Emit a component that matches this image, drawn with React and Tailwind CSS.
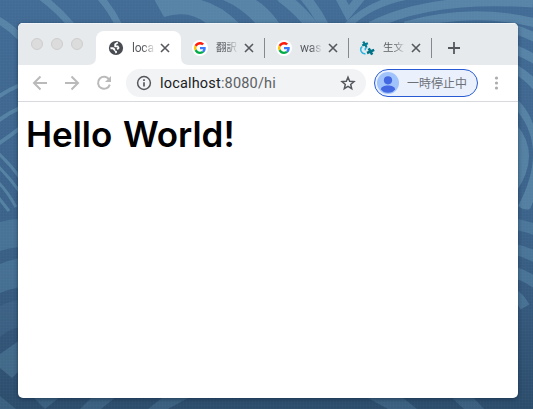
import React from "react";

function Wallpaper() {
  return (
    <svg className="absolute inset-0 h-full w-full" viewBox="0 0 533 409" preserveAspectRatio="none">
      <defs>
        <linearGradient id="sea" x1="0" y1="0" x2="0" y2="1">
          <stop offset="0" stopColor="#426b95" />
          <stop offset="0.55" stopColor="#3b6289" />
          <stop offset="1" stopColor="#2c4c6b" />
        </linearGradient>
        <pattern id="weave" width="3" height="3" patternUnits="userSpaceOnUse">
          <path d="M0 0h3M0 0v3" stroke="#9cc0d8" strokeWidth="0.6" opacity="0.08" />
        </pattern>
      </defs>
      <rect width="533" height="409" fill="url(#sea)" />
      <g fill="none" stroke="#6c9bb8" strokeOpacity="0.52">
        <path d="M40-4Q58 9 72 26" strokeWidth="7" />
        <path d="M99-4Q111 9 119 26" strokeWidth="7" />
        <path d="M-2 20Q9 26 20 37" strokeWidth="7" />
        <path d="M281-4Q300 10 312 26" strokeWidth="12" />
        <path d="M304-4Q316 10 324 26" strokeWidth="10" />
        <path d="M339-4L348 13L362-4" strokeWidth="9" />
        <path d="M347 26Q370 3 408-4" strokeWidth="7" />
        <path d="M371 26Q430-4 533 3" strokeWidth="9" />
        <path d="M405 26Q470 7 536 23" strokeWidth="9" />
        <path d="M514 29Q526 33 536 38" strokeWidth="9" />
        <path d="M514 49Q526 54 536 60" strokeWidth="9" />
        <path d="M514 68Q527 76 536 86" strokeWidth="9" />
        <path d="M-2 97Q8 90 20 85M-2 121Q8 113 20 108M-2 144Q10 136 20 128" strokeWidth="4" />
        <path d="M-2 153Q11 165 20 178M-2 166Q9 177 20 192M-2 182Q7 191 16 207M-2 197L9 211" strokeWidth="3" />
      </g>
      <g fill="none" stroke="#6395b4" strokeOpacity="0.4">
        <path d="M514 224Q526 226 536 230M514 249Q526 252 536 257M514 272Q526 276 536 283" strokeWidth="11" />
        <path d="M514 294Q520 298 525 307" strokeWidth="10" />
      </g>
      <g fill="#6c9bb8" fillOpacity="0.5">
        <path d="M155 1L164 17Q189 9 207 24H240Q221 5 201 0H155Z" />
        <path d="M223 0Q242 8 256 24H280Q268 7 256 0Z" />
        <path d="M516 124Q542 154 516 192Z" />
        <path d="M518 100Q530 112 534 127V200L530 209Q524 211 518 206Q548 150 518 112Z" />
      </g>
      <g fill="#6395b4" fillOpacity="0.34">
        <path d="M0 222Q10 219 20 219V247Q8 248 0 251Z" />
        <path d="M0 264Q10 260 20 258V287Q10 289 0 293Z" />
        <path d="M0 354L20 340V370L12 378L0 368Z" />
      </g>
      <g fill="#6395b4" fillOpacity="0.26">
        <path d="M0 396L16 409H0ZM33 397H60L45 409ZM92 397H116L101 409H80ZM163 397H190L168 409H148ZM366 397H402L417 409H388ZM451 397H473L484 409H464Z" />
      </g>
      <path d="M0 306Q10 301 20 300V327Q9 329 0 337Z" fill="#6395b4" fillOpacity="0.15" />
      <rect width="533" height="409" fill="url(#weave)" />
    </svg>
  );
}

function Globe() {
  return (
    <svg className="size-4 shrink-0" viewBox="0 0 16 16">
      <circle cx="8" cy="8" r="7.1" fill="#484b51" />
      <path d="M9.800 2.400L7.200 4.200V6.400H9.700L10.500 7.900L9.200 9.300" fill="none" stroke="#fff" strokeWidth="1.800" />
      <path d="M2.300 7.300H5.200L7.200 8.800V10.500L8.900 11V12.800L7.600 13.600L6.700 11.300L4.600 9.200H2.600Z" fill="#fff" />
    </svg>
  );
}

function Google() {
  return (
    <svg className="size-4 shrink-0" viewBox="0 0 16 16">
      <circle cx="8" cy="8" r="8" fill="#fff" />
      <g transform="translate(2 2) scale(.25)">
        <path fill="#ff1c0c" d="M24 9.500c3.500 0 6.700 1.200 9.200 3.600l6.900-6.900C35.900 2.400 30.500 0 24 0 14.600 0 6.500 5.400 2.600 13.200l8 6.200C12.400 13.700 17.700 9.500 24 9.500z" />
        <path fill="#3b7cff" d="M47 24.500c0-1.600-.2-3.100-.4-4.500H24v9h12.900c-.6 3-2.300 5.500-4.800 7.200l7.700 6C44.400 38 47 31.800 47 24.500z" />
        <path fill="#ffc400" d="M10.500 28.600A14.500 14.500 0 0 1 10.500 19.400l-8-6.200A24 24 0 0 0 2.500 34.800z" />
        <path fill="#00ac47" d="M24 48c6.500 0 11.900-2.100 15.900-5.800l-7.700-6c-2.200 1.400-4.900 2.300-8.200 2.300-6.300 0-11.600-4.200-13.500-9.900l-8 6.200C6.500 42.600 14.600 48 24 48z" />
      </g>
    </svg>
  );
}

function Crosses() {
  return (
    <svg className="size-4 shrink-0" viewBox="0 0 16 16" fill="none">
      <path d="M3 6.600C.5 9 1.600 13.600 6.500 13.900M8.200 7.300C6.100 7.900 5.800 9.200 6.600 10.300" stroke="#2bb5df" strokeWidth="1.500" />
      <path d="M4.200 1.600L7.600 7M8.900 3.200L3.200 5.500" stroke="#007b92" strokeWidth="2.300" />
      <path d="M9.700 8.400L13.200 14.600M15.200 9.900L8 13" stroke="#007387" strokeWidth="2.600" />
    </svg>
  );
}

function Tab({ icon, title, active = false, cjk = false }) {
  return (
    <div className={active ? "relative flex h-[34px] w-[85px] items-center rounded-t-lg bg-white pl-3" : "flex h-[34px] w-[84px] items-center pl-[11px]"}>
      {active && (
        <>
          <svg className="absolute bottom-0 -left-2 size-2" viewBox="0 0 8 8"><path d="M8 0V8H0Q8 8 8 0Z" fill="#fff" /></svg>
          <svg className="absolute bottom-0 -right-2 size-2" viewBox="0 0 8 8"><path d="M0 0V8H8Q0 8 0 0Z" fill="#fff" /></svg>
        </>
      )}
      {icon}
      <span className="ml-2 flex w-[21px]">
        <span className={(cjk ? "text-[10.5px] leading-4" : "text-xs tracking-[-0.2px]") + " bg-linear-to-r from-[#55585d] from-50% to-[#55585d]/15 bg-clip-text whitespace-nowrap text-transparent"}>
          {title}
        </span>
      </span>
      <svg className="ml-[7px] size-[10px] shrink-0" viewBox="0 0 10 10" fill="none" stroke="#55585d" strokeWidth="1.600">
        <path d="M1 1l8 8M9 1L1 9" />
      </svg>
    </div>
  );
}

function Divider() {
  return <div className="-ml-px h-5 w-px bg-[#85898e]" />;
}

function TabStrip() {
  return (
    <div className="flex h-[42px] items-end border-t border-[#f2f5f7] bg-[#e6eaed]">
      <div className="flex h-[34px] w-[78px] gap-2 pt-[7px] pl-[13px]">
        <i className="size-3 rounded-full border border-[#cecdcd] bg-[#dcdcdc]" />
        <i className="size-3 rounded-full border border-[#cecdcd] bg-[#dcdcdc]" />
        <i className="size-3 rounded-full border border-[#cecdcd] bg-[#dcdcdc]" />
      </div>
      <div className="flex items-center">
        <Tab active icon={<Globe />} title="loca" />
        <Tab icon={<Google />} title="翻訳" cjk />
        <Divider />
        <Tab icon={<Google />} title="was" />
        <Divider />
        <div className="-ml-px"><Tab icon={<Crosses />} title="生文" cjk /></div>
        <Divider />
        <svg className="ml-4 size-3" viewBox="0 0 12 12" stroke="#55585d" strokeWidth="1.800"><path d="M6 0v12M0 6h12" /></svg>
      </div>
    </div>
  );
}

function Toolbar() {
  return (
    <div className="flex h-[37px] items-center border-b border-[#d7d9dc] bg-white pl-[14px]">
      <div className="flex gap-4">
        <svg className="size-4" viewBox="0 0 16 16" fill="none" stroke="#bababa" strokeWidth="2"><path d="M15 8H2.500M8.500 1.500L2 8l6.500 6.500" /></svg>
        <svg className="size-4" viewBox="0 0 16 16" fill="none" stroke="#bababa" strokeWidth="2"><path d="M1 8h12.500M7.500 1.500L14 8l-6.500 6.500" /></svg>
        <svg className="size-4" viewBox="0 0 16 16" fill="none" stroke="#bababa" strokeWidth="2"><path d="M13.200 4.700A6 6 0 1 0 13.800 9.600" /><path d="M15 1v6H9z" fill="#bababa" stroke="none" /></svg>
      </div>
      <div className="ml-[14px] flex h-7 w-60 items-center rounded-full bg-[#f1f3f4] pr-[10px] pl-[10px]">
        <svg className="size-4" viewBox="0 0 16 16" fill="none" stroke="#55585d" strokeWidth="1.500"><circle cx="8" cy="8" r="6.400" /><path d="M8 7.200v4.300M8 4.300v1.600" strokeWidth="1.700" /></svg>
        <span className="ml-2 translate-y-px font-[Roboto] text-[14.5px] leading-5 tracking-[0.18px] text-[#5c6065]"><span className="text-[#202124]">localhost</span>:8080/hi</span>
        <svg className="ml-auto size-4" viewBox="0 0 16 16" fill="none" stroke="#55585d" strokeWidth="1.500"><path d="M8 2.200l1.700 4 4.300.4-3.300 2.800 1 4.200L8 11.400l-3.700 2.200 1-4.200L2 6.600l4.300-.4z" /></svg>
      </div>
      <div className="ml-2 flex h-7 w-[104px] items-center rounded-full border border-[#285bd3] bg-[#eaf1fd] pl-[2px]">
        <svg className="size-[22px]" viewBox="0 0 22 22"><circle cx="11" cy="11" r="11" fill="#a1c3fb" /><circle cx="11" cy="8.300" r="4.100" fill="#4468e1" /><path d="M4 17.200C4 12.300 18 12.300 18 17.200Q16 20.800 11 20.800T4 17.200z" fill="#4468e1" /></svg>
        <span className="ml-2 translate-y-px text-xs whitespace-nowrap text-[#6c7077]">一時停止中</span>
      </div>
      <svg className="ml-[10px] size-4" viewBox="0 0 16 16" fill="#acacac"><circle cx="8.500" cy="3" r="1.600" /><circle cx="8.500" cy="8" r="1.600" /><circle cx="8.500" cy="13" r="1.600" /></svg>
    </div>
  );
}

export default function App() {
  return (
    <div className="relative h-[409px] w-[533px] overflow-hidden pt-[23px] pl-[18px] font-[Roboto,'Noto_Sans_CJK_JP',sans-serif]">
      <Wallpaper />
      <main className="relative h-[375px] w-[500px] overflow-hidden rounded-[5px] bg-white shadow-[0_1px_4px_rgba(10,30,55,0.55)]">
        <TabStrip />
        <Toolbar />
        <h1 className="pt-3 pl-2 font-[Inter,sans-serif] text-[35px] leading-10 font-semibold tracking-[-0.05px] text-black [word-spacing:2px]">Hello World!</h1>
      </main>
    </div>
  );
}
